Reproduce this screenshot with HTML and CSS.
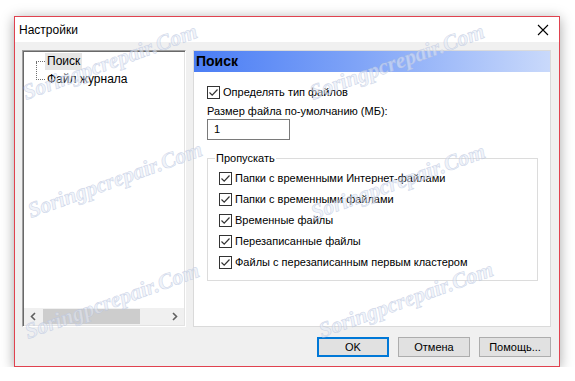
FILE: index.html
```html
<!DOCTYPE html>
<html lang="ru">
<head>
  <meta charset="UTF-8">
  <title>Настройки</title>
  <link rel="stylesheet" href="styles.css">
</head>
<body>

<div class="window">
  <div class="titlebar">
    <span class="title">Настройки</span>
    <svg class="close" width="12" height="12" viewBox="0 0 12 12">
      <path d="M1 1 L11 11 M11 1 L1 11" stroke="#000" stroke-width="1.1" fill="none"/>
    </svg>
  </div>

  <div class="content">
    <div class="panels">
      <div class="tree">
        <div class="tree-items">
          <div class="tree-lines"></div>
          <div class="tree-item selected"><span class="branch"></span><span class="label">Поиск</span></div>
          <div class="tree-item"><span class="branch"></span><span class="label">Файл журнала</span></div>
        </div>
        <div class="hscroll">
          <svg class="arrow" width="9" height="9" viewBox="0 0 9 9"><path d="M6 1 L2.5 4.5 L6 8" stroke="#606060" stroke-width="1.6" fill="none"/></svg>
          <div class="track"><div class="thumb"></div></div>
          <svg class="arrow" width="9" height="9" viewBox="0 0 9 9"><path d="M3 1 L6.5 4.5 L3 8" stroke="#606060" stroke-width="1.6" fill="none"/></svg>
        </div>
      </div>

      <div class="page">
        <div class="page-head">Поиск</div>
        <div class="page-body">
          <label class="check"><span class="box"><svg width="11" height="11" viewBox="0 0 11 11"><path d="M1.5 5.5 L4.2 8.2 L9.5 2.5" stroke="#333" stroke-width="1.2" fill="none"/></svg></span>Определять тип файлов</label>
          <div class="field-label">Размер файла по-умолчанию (МБ):</div>
          <div class="textbox">1</div>

          <fieldset class="group">
            <legend>Пропускать</legend>
            <label class="check"><span class="box"><svg width="11" height="11" viewBox="0 0 11 11"><path d="M1.5 5.5 L4.2 8.2 L9.5 2.5" stroke="#333" stroke-width="1.2" fill="none"/></svg></span>Папки с временными Интернет-файлами</label>
            <label class="check"><span class="box"><svg width="11" height="11" viewBox="0 0 11 11"><path d="M1.5 5.5 L4.2 8.2 L9.5 2.5" stroke="#333" stroke-width="1.2" fill="none"/></svg></span>Папки с временными файлами</label>
            <label class="check"><span class="box"><svg width="11" height="11" viewBox="0 0 11 11"><path d="M1.5 5.5 L4.2 8.2 L9.5 2.5" stroke="#333" stroke-width="1.2" fill="none"/></svg></span>Временные файлы</label>
            <label class="check"><span class="box"><svg width="11" height="11" viewBox="0 0 11 11"><path d="M1.5 5.5 L4.2 8.2 L9.5 2.5" stroke="#333" stroke-width="1.2" fill="none"/></svg></span>Перезаписанные файлы</label>
            <label class="check"><span class="box"><svg width="11" height="11" viewBox="0 0 11 11"><path d="M1.5 5.5 L4.2 8.2 L9.5 2.5" stroke="#333" stroke-width="1.2" fill="none"/></svg></span>Файлы с перезаписанным первым кластером</label>
          </fieldset>
        </div>
      </div>
    </div>

    <div class="buttons">
      <button class="default">OK</button>
      <button>Отмена</button>
      <button>Помощь...</button>
    </div>
  </div>
</div>

<div class="watermarks">
  <span class="wm wm-1">Soringpcrepair.Com</span>
  <span class="wm wm-2">Soringpcrepair.Com</span>
  <span class="wm wm-3">Soringpcrepair.Com</span>
  <span class="wm wm-4">Soringpcrepair.Com</span>
  <span class="wm wm-5">Soringpcrepair.Com</span>
  <span class="wm wm-6">Soringpcrepair.Com</span>
</div>

</body>
</html>
```

FILE: styles.css
```css
body {
  margin: 0;
  background: #fff;
  font-family: "Liberation Sans", Arial, sans-serif;
  font-size: 11px;
  color: #000;
}

.window {
  margin: 16px 0 0 14px;
  width: 544px;
  height: 349px;
  border: 1px solid #e0424f;
  background: #f0f0f0;
  box-shadow: 0 2px 12px rgba(0, 0, 0, 0.35);
  display: flex;
  flex-direction: column;
}

.titlebar {
  height: 25px;
  background: #fff;
  display: flex;
  align-items: center;
  justify-content: space-between;
  padding: 0 10px 0 4px;
}
.title {
  font-size: 12px;
}

.content {
  flex: 1;
  padding: 8px 8px 0 7px;
}

.panels {
  display: flex;
  gap: 7px;
  height: 277px;
}

/* left tree */
.tree {
  width: 160px;
  border: 1px solid;
  border-color: #a0a0a0 #fff #fff #a0a0a0;
  box-shadow: inset 1px 1px 0 #696969, inset -1px -1px 0 #e3e3e3;
  background: #fff;
  display: flex;
  flex-direction: column;
  padding: 1px;
  font-size: 12px;
}
.tree-items {
  flex: 1;
  position: relative;
  padding-left: 12px;
}
.tree-lines {
  position: absolute;
  left: 12px;
  top: 10px;
  height: 18px;
  border-left: 1px dotted #707070;
}
.tree-item {
  display: flex;
  align-items: center;
  height: 18px;
}
.branch {
  width: 9px;
  border-top: 1px dotted #707070;
}
.label {
  padding: 0 2px;
  line-height: 17px;
}
.tree-item.selected .label {
  background: #e5e5e5;
}

.hscroll {
  height: 17px;
  background: #f0f0f0;
  display: flex;
  align-items: center;
}
.hscroll .arrow {
  flex: none;
  margin: 0 5px;
}
.track {
  flex: 1;
  height: 15px;
}
.thumb {
  width: 97px;
  height: 15px;
  background: #cdcdcd;
}

/* right page */
.page {
  flex: 1;
  background: #fff;
  border: 1px solid #dadada;
  display: flex;
  flex-direction: column;
}
.page-head {
  height: 21px;
  line-height: 21px;
  padding-left: 2px;
  font-weight: bold;
  font-size: 14px;
  background: linear-gradient(to right, #4a7df5, #7ea3f7 45%, #c9d9fb);
}
.page-body {
  padding: 13px 12px 0 13px;
}

.check {
  display: flex;
  align-items: center;
  height: 14px;
  white-space: nowrap;
}
.box {
  width: 11px;
  height: 11px;
  border: 1px solid #333;
  background: #fff;
  margin-right: 3px;
  flex: none;
}
.box svg {
  display: block;
}

.field-label {
  margin-top: 5px;
  line-height: 14px;
}
.textbox {
  width: 75px;
  height: 19px;
  line-height: 19px;
  border: 1px solid #7a7a7a;
  padding-left: 6px;
  margin-top: 1px;
}

.group {
  margin: 11px 0 0 0;
  border: 1px solid #dcdcdc;
  padding: 6px 11px 11px 11px;
  display: flex;
  flex-direction: column;
  gap: 7px;
}
.group legend {
  padding: 0 1px;
  margin-left: -4px;
  line-height: 14px;
}

.buttons {
  display: flex;
  justify-content: flex-end;
  gap: 9px;
  margin-top: 10px;
}
.buttons button {
  width: 72px;
  height: 20px;
  border: 1px solid #adadad;
  background: #e1e1e1;
  font-family: "Liberation Sans", Arial, sans-serif;
  font-size: 11px;
  padding: 0;
  color: #000;
}
.buttons button.default {
  border: 2px solid #0078d7;
}

/* watermark overlay */
.watermarks {
  position: absolute;
  left: 0;
  top: 0;
  width: 575px;
  height: 381px;
  pointer-events: none;
}
.wm {
  position: absolute;
  transform: translate(-50%, -50%) rotate(-20deg);
  font-family: "Liberation Serif", serif;
  font-style: italic;
  font-weight: bold;
  font-size: 22px;
  white-space: nowrap;
  color: rgba(228, 233, 244, 0.55);
  -webkit-text-stroke: 0.6px rgba(175, 188, 218, 0.55);
}
.wm-1 { left: 110px; top: 62px; }
.wm-2 { left: 115px; top: 180px; }
.wm-3 { left: 112px; top: 301px; }
.wm-4 { left: 397px; top: 62px; }
.wm-5 { left: 398px; top: 182px; }
.wm-6 { left: 406px; top: 300px; }
```
